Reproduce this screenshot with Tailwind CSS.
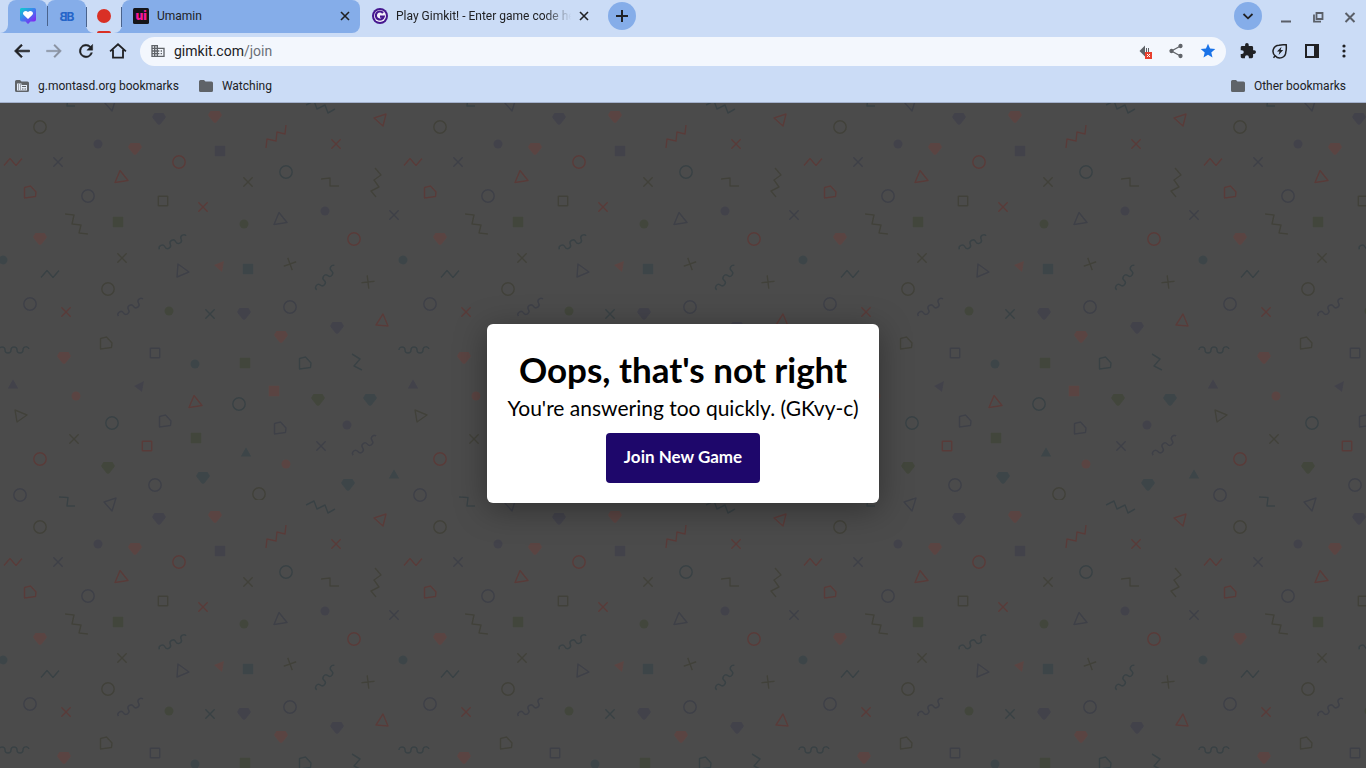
<!DOCTYPE html>
<html lang="en">
<head>
  <meta charset="UTF-8" />
  <meta name="viewport" content="width=device-width, initial-scale=1.0" />
  <title>Play Gimkit! - Enter game code here</title>
  <script src="https://cdn.jsdelivr.net/npm/@tailwindcss/browser@4"></script>
</head>
<body class="flex h-screen flex-col overflow-hidden bg-[#4b4b4b] font-['Roboto',sans-serif] text-xs text-[#202124]">

  <header class="border-b border-[#a3b1cc] bg-[#cbdcf6]">
    <!-- Tab strip -->
    <div class="flex h-[33px] items-stretch">
      <svg class="w-2" viewBox="0 0 8 33" fill="#85ade9"><path d="M8 25v8H0a8 8 0 0 0 8-8z"/></svg>
      <button aria-label="Pinned tab" class="flex w-[39px] items-center justify-center rounded-t-lg bg-[#85ade9] pb-0.5">
        <svg class="size-4" viewBox="0 0 16 16">
          <defs><linearGradient id="heart" x1="0" y1="0" x2="0.8" y2="1"><stop offset="0" stop-color="#08d3cb"/><stop offset=".5" stop-color="#3f7df0"/><stop offset="1" stop-color="#8a1df2"/></linearGradient></defs>
          <path fill="url(#heart)" d="M1.500 0h13A1.500 1.500 0 0 1 16 1.500v10a2 2 0 0 1-2 2h-3.500L8 16l-2.500-2.500H2a2 2 0 0 1-2-2v-10A1.500 1.500 0 0 1 1.500 0z"/>
          <path fill="#fff" d="M8 11 4 7.200a2.400 2.400 0 0 1 0-3.600 2.600 2.600 0 0 1 4 .5 2.600 2.600 0 0 1 4-.5 2.400 2.400 0 0 1 0 3.600z"/>
        </svg>
      </button>
      <button aria-label="Pinned tab" class="flex w-[39px] items-center rounded-t-lg bg-[#85ade9] pb-0.5">
        <span class="h-5 w-px bg-[#4a638c]"></span>
        <svg class="mx-auto size-4" viewBox="0 0 16 16" font-family="Inter, sans-serif" font-size="12" font-weight="700" fill="#2565c8">
          <text x="7.500" y="12.500">B</text>
          <text x="-8.500" y="12.500" transform="scale(-1 1)">B</text>
        </svg>
      </button>
      <div class="flex bg-linear-to-b from-[#cbdcf6] from-50% to-[#85ade9] to-50%">
        <button aria-label="Recording tab" class="flex w-9 items-center justify-between rounded-b-lg bg-[#cbdcf6]">
          <span class="h-5 w-px bg-[#4a638c]"></span>
          <span class="flex h-full flex-col items-center justify-end gap-2">
            <span class="size-3.5 rounded-full bg-[#d93025]"></span>
            <span class="h-0.5 w-3.5 rounded-t-sm bg-[#d93025]"></span>
          </span>
          <span class="h-5 w-px bg-[#4a638c]"></span>
        </button>
      </div>
      <div class="flex w-[238px] items-center rounded-t-lg rounded-br-lg bg-[#85ade9] pr-1 pb-0.5 pl-[11px]">
        <svg class="size-4" viewBox="0 0 16 16"><rect width="16" height="16" rx="1.500" fill="#15161a"/><text x="2.500" y="12" font-family="Inter, sans-serif" font-size="12" font-weight="900" fill="#f5179a">ui</text></svg>
        <span class="ml-2 flex-1">Umamin</span>
        <button aria-label="Close Umamin" class="p-1"><svg class="size-[14px]" viewBox="0 0 14 14" stroke="#202124" stroke-width="1.600"><path d="M3 3l8 8M11 3l-8 8"/></svg></button>
      </div>
      <div class="flex w-60 items-center pr-[5px] pb-0.5 pl-3">
        <svg class="size-4" viewBox="0 0 16 16"><circle cx="8" cy="8" r="8" fill="#46178f"/><circle cx="8" cy="8" r="6" fill="#f4f0fa"/><path d="M11 5A4 4 0 1 0 11.700 8.600H8" fill="none" stroke="#46178f" stroke-width="2.200"/></svg>
        <span class="ml-2 flex-1 overflow-hidden whitespace-nowrap [mask-image:linear-gradient(to_right,black_84%,transparent_99%)]">Play Gimkit! - Enter game code here</span>
        <button aria-label="Close Gimkit" class="p-1"><svg class="size-[14px]" viewBox="0 0 14 14" stroke="#202124" stroke-width="1.600"><path d="M3 3l8 8M11 3l-8 8"/></svg></button>
      </div>
      <button aria-label="New tab" class="mt-0.5 ml-2 flex size-7 items-center justify-center rounded-full bg-[#85ade9]">
        <svg class="size-3" viewBox="0 0 12 12" stroke="#202124" stroke-width="2"><path d="M6 0v12M0 6h12"/></svg>
      </button>
      <div class="ml-auto flex items-center">
        <button aria-label="Search tabs" class="mr-2 mb-0.5 flex size-7 items-center justify-center rounded-full bg-[#85ade9]"><svg class="size-3" viewBox="0 0 12 12" fill="none" stroke="#202124" stroke-width="1.800"><path d="M1.500 4 6 8.300 10.500 4"/></svg></button>
        <button aria-label="Minimize" class="w-8 p-2"><svg class="size-4" viewBox="0 0 16 16" fill="#5a5f68"><path d="M3 11.500h10v2H3z"/></svg></button>
        <button aria-label="Restore" class="w-8 p-2"><svg class="size-4" viewBox="0 0 16 16" fill="none" stroke="#5a5f68" stroke-width="1.800"><path d="M6.500 4h6v6h-6zM4 5.500v7.200h7"/></svg></button>
        <button aria-label="Close window" class="w-8 p-2"><svg class="size-4" viewBox="0 0 16 16" stroke="#5a5f68" stroke-width="2"><path d="M3.500 4l9 9M12.500 4l-9 9"/></svg></button>
      </div>
    </div>

    <!-- Toolbar -->
    <div class="flex h-9 items-center px-3">
      <nav class="flex gap-3">
        <button aria-label="Back"><svg class="size-5" viewBox="0 0 24 24" fill="#202124"><path d="M21 11H6.830l5.590-5.590L11 4l-8 8 8 8 1.410-1.410L6.830 13H21z" stroke="#202124" stroke-width=".8"/></svg></button>
        <button aria-label="Forward"><svg class="size-5" viewBox="0 0 24 24" fill="#8991a0"><path d="M3 11h14.170l-5.590-5.590L13 4l8 8-8 8-1.410-1.410L17.170 13H3z" stroke="#8991a0" stroke-width=".4"/></svg></button>
        <button aria-label="Reload"><svg class="size-5" viewBox="0 0 24 24" fill="#202124"><path stroke="#202124" stroke-width=".5" d="M17.650 6.350A8 8 0 1 0 19.730 14h-2.080A6 6 0 1 1 12 6c1.660 0 3.140.69 4.220 1.780L13 11h7V4z"/></svg></button>
        <button aria-label="Home"><svg class="size-5" viewBox="0 0 24 24" fill="none" stroke="#202124" stroke-width="2.200"><path d="M2.500 12.500 12 4l9.500 8.500M6 10.500V20h12v-9.500"/></svg></button>
      </nav>
      <div class="ml-3 flex h-[29px] flex-1 items-center rounded-full bg-[#f3f7fd] px-2.5">
        <svg class="size-4" viewBox="0 0 24 24" fill="#5f6368"><path d="M12 7V3H2v18h20V7H12zM6 19H4v-2h2v2zm0-4H4v-2h2v2zm0-4H4V9h2v2zm0-4H4V5h2v2zm4 12H8v-2h2v2zm0-4H8v-2h2v2zm0-4H8V9h2v2zm0-4H8V5h2v2zm10 12h-8v-2h2v-2h-2v-2h2v-2h-2V9h8v10zm-2-8h-2v2h2v-2zm0 4h-2v2h2v-2z"/></svg>
        <a href="#" class="ml-2 flex-1 text-sm">gimkit.com<span class="text-[#6b7078]">/join</span></a>
        <div class="flex items-center gap-4">
          <button aria-label="Sound blocked"><svg class="size-4" viewBox="0 0 16 16"><path fill="#5f6368" d="M3.500 8 9 2.500v11z"/><path stroke="#5f6368" d="M10.500 5v4M12.500 5v4"/><rect x="9" y="9" width="7" height="7" fill="#e8402f"/><path d="M11 11l3 3M14 11l-3 3" stroke="#fff"/></svg></button>
          <button aria-label="Share"><svg class="size-4" viewBox="0 0 16 16" fill="#5f6368" stroke="#5f6368" stroke-width="1.300"><path fill="none" d="M12.500 3 3.500 8l9 5"/><circle cx="12.500" cy="3" r="1.500"/><circle cx="3.500" cy="8" r="1.500"/><circle cx="12.500" cy="13" r="1.500"/></svg></button>
          <button aria-label="Edit bookmark"><svg class="size-4" viewBox="1 1 22 22" fill="#1a73e8"><path d="M12 17.270 18.180 21l-1.640-7.030L22 9.240l-7.190-.61L12 2 9.190 8.630 2 9.240l5.460 4.730L5.820 21z"/></svg></button>
        </div>
      </div>
      <div class="ml-3 flex gap-3">
        <button aria-label="Extensions" class="flex size-5 items-center justify-center"><svg class="size-4" viewBox="1 1 22 22" fill="#202124"><path d="M20.500 11H19V7a2 2 0 0 0-2-2h-4V3.500a2.500 2.500 0 0 0-5 0V5H4a2 2 0 0 0-2 2v3.800h1.500a2.700 2.700 0 0 1 0 5.400H2V20a2 2 0 0 0 2 2h3.800v-1.500a2.700 2.700 0 0 1 5.400 0V22H17a2 2 0 0 0 2-2v-4h1.500a2.500 2.500 0 0 0 0-5z"/></svg></button>
        <button aria-label="Energy saver" class="flex size-5 items-center justify-center"><svg class="size-4" viewBox="0 0 16 16" fill="none" stroke="#202124" stroke-width="1.500"><path d="M3.200 12.800A6 6 0 0 1 7 2.200c2.500-.6 5-.2 7.200-.4.200 2.400.4 4.700-.4 7.200a6 6 0 0 1-10.600 3.800zM3.200 12.800 1.500 14.700"/><path fill="#202124" stroke="none" d="M9.500 3.800 5 8.600h2.500L6.600 12l4.600-4.900H8.700z"/></svg></button>
        <button aria-label="Side panel" class="flex size-5 items-center justify-center"><svg class="size-3.5" viewBox="0 0 14 14"><path fill="#202124" fill-rule="evenodd" d="M0 0h14v14H0zM2 2v10h7V2z"/></svg></button>
        <button aria-label="Menu" class="flex size-5 items-center justify-center"><svg class="size-4" viewBox="0 0 16 16" fill="#202124"><circle cx="8" cy="3" r="1.600"/><circle cx="8" cy="8" r="1.600"/><circle cx="8" cy="13" r="1.600"/></svg></button>
      </div>
    </div>

    <!-- Bookmarks bar -->
    <div class="flex h-[33px] items-center gap-[19px] pr-5 pl-3.5">
      <a href="#" class="flex items-center gap-2">
        <svg class="size-4" viewBox="0 0 16 16"><path fill="#5f6368" d="M2.500 2H6l1.500 1.500h6A1.500 1.500 0 0 1 15 5v7.500a1.500 1.500 0 0 1-1.500 1.500h-11A1.500 1.500 0 0 1 1 12.500v-9A1.500 1.500 0 0 1 2.500 2z"/><path fill="#e4ecf8" d="M3 5.500h4.500V7H13v5.500H3z"/><path fill="#5f6368" d="M4 6.500h1v1H4zM6 6.500h1v1H6zM4 8.500h1v1H4zM6 8.500h1v1H6zM4 10.500h1v1H4zM6 10.500h1v1H6zM8 8h4v1H8zM8 10.500h1.500v1H8zM10.500 10.500H12v1h-1.500z"/></svg>
        g.montasd.org bookmarks
      </a>
      <a href="#" class="flex items-center gap-2">
        <svg class="size-4" viewBox="0 0 16 16" fill="#5f6368"><path d="M2.500 2H6l1.500 1.500h6A1.500 1.500 0 0 1 15 5v7.500a1.500 1.500 0 0 1-1.500 1.500h-11A1.500 1.500 0 0 1 1 12.500v-9A1.500 1.500 0 0 1 2.500 2z"/></svg>
        Watching
      </a>
      <a href="#" class="ml-auto flex items-center gap-2">
        <svg class="size-4" viewBox="0 0 16 16" fill="#5f6368"><path d="M2.500 2H6l1.500 1.500h6A1.500 1.500 0 0 1 15 5v7.500a1.500 1.500 0 0 1-1.500 1.500h-11A1.500 1.500 0 0 1 1 12.500v-9A1.500 1.500 0 0 1 2.500 2z"/></svg>
        Other bookmarks
      </a>
    </div>
  </header>

  <main class="relative flex flex-1 items-center justify-center pb-11">
    <!-- Confetti wallpaper, 400px tile -->
    <svg class="absolute inset-0 h-full w-full" aria-hidden="true">
      <defs>
        <g id="ring"><circle r="6.200"/></g>
        <g id="dot"><circle r="4.500"/></g>
        <g id="box"><path d="M-4.700-4.700h9.400v9.400h-9.400z"/></g>
        <g id="block"><path d="M-5.300-5.300H5.300V5.300H-5.300z"/></g>
        <g id="cross"><path d="M-4.700-4.700 4.700 4.700M4.700-4.700-4.700 4.700"/></g>
        <g id="gem"><path d="M-4.500-6h9L6.800-2.500 6.500-1 1 5.800h-2L-6.500-1l-.3-1.500z"/></g>
        <g id="tri"><path d="M-1-6.500-6 5.500 7 3.500z"/></g>
        <g id="wedge"><path d="M0-4.800 5.300 4.500H-5.300z"/></g>
        <g id="pent"><path d="M-5.500-4.500.5-6 6 0 5.500 4.500-5.500 6z"/></g>
        <g id="wave"><path d="M-15 0c0-4 6-4 6 0s6 4 6 0 6-4 6 0 6 4 6 0 5-4 6-1"/></g>
        <g id="zig"><path d="M-9 3.500-3-3.500 3 3.500 9-3.500"/></g>
        <g id="stair"><path d="M-11-10-2-9-4 0 5 1 3 9 12 10"/></g>
        <g id="step"><path d="M-8-4l9 .5-1 8.500h8"/></g>
        <pattern id="confetti" width="400" height="400" patternUnits="userSpaceOnUse" patternTransform="translate(0 -3)">
          <g fill="#5a4442">
            <use href="#gem" x="215" y="17"/><use href="#gem" x="135" y="49"/><use href="#gem" x="40" y="139"/><use href="#gem" x="64" y="258"/><use href="#gem" x="281" y="237"/>
            <use href="#dot" x="76" y="296"/><use href="#dot" x="286" y="364"/><use href="#block" x="274" y="291"/>
            <path d="M214 165l10-4-2 11z"/>
          </g>
          <g fill="#42424a">
            <use href="#gem" x="159" y="19"/><use href="#gem" x="244" y="214"/><use href="#gem" x="337" y="228"/>
            <use href="#dot" x="98" y="44"/><use href="#dot" x="325" y="111"/><use href="#dot" x="347" y="325"/><use href="#block" x="220" y="51"/>
            <use href="#wedge" x="13" y="284"/><path d="M134 286l10-5-2 11z"/>
          </g>
          <g fill="#42463c">
            <use href="#gem" x="108" y="368"/><use href="#gem" x="318" y="300"/><use href="#dot" x="244" y="124"/><use href="#dot" x="169" y="211"/>
            <use href="#block" x="118" y="122"/><use href="#block" x="245" y="263"/><use href="#block" x="196" y="338"/>
          </g>
          <g fill="#3d4548">
            <use href="#gem" x="203" y="378"/><use href="#gem" x="370" y="300"/><use href="#gem" x="348" y="385"/><use href="#dot" x="3" y="160"/><use href="#dot" x="403" y="160"/><use href="#dot" x="195" y="264"/>
            <use href="#block" x="248" y="169"/><use href="#wedge" x="246" y="352"/><use href="#wedge" x="394" y="374"/>
          </g>
          <g fill="none" stroke="#583b39" stroke-width="1.500" stroke-linejoin="round">
            <use href="#ring" x="179" y="62"/><use href="#ring" x="354" y="139"/><use href="#ring" x="40" y="359"/>
            <use href="#cross" x="203" y="107"/><use href="#cross" x="336" y="44"/><use href="#cross" x="66" y="212"/>
            <use href="#zig" x="13" y="62"/><use href="#zig" x="413" y="62"/><use href="#pent" x="30" y="92"/><use href="#tri" x="121" y="77"/><use href="#tri" x="195" y="302"/><use href="#box" x="147" y="346"/>
            <path d="M374 18l12-4-3 12zM383 214l-7 11 12 1zM266 48l1-9 9 2 1-9 8 2 1-9"/>
          </g>
          <g fill="none" stroke="#3e4047" stroke-width="1.500" stroke-linejoin="round">
            <use href="#ring" x="88" y="96"/><use href="#ring" x="30" y="204"/><use href="#ring" x="20" y="395"/><use href="#ring" x="20" y="-5"/><use href="#ring" x="155" y="385"/><use href="#ring" x="290" y="207"/>
            <use href="#cross" x="58" y="62"/><use href="#cross" x="394" y="115"/><use href="#cross" x="321" y="346"/>
            <use href="#tri" x="280" y="119"/><path d="M178 164l-1 13 12-5z"/><use href="#pent" x="165" y="321"/><use href="#pent" x="280" y="328"/><use href="#box" x="155" y="253"/>
            <path d="M104 2l12-4-4 13zM104 402l12-4-4 13z"/>
            <use href="#wave" transform="translate(131 208) rotate(-33)"/><use href="#wave" transform="translate(365 346) rotate(-38)"/>
          </g>
          <g fill="none" stroke="#394144" stroke-width="1.500" stroke-linejoin="round">
            <use href="#ring" x="286" y="72"/><use href="#ring" x="112" y="323"/><use href="#ring" x="239" y="304"/><use href="#cross" x="210" y="214"/>
            <use href="#zig" x="50" y="174"/><use href="#pent" x="305" y="263"/><use href="#wave" x="14" y="250"/><use href="#wave" x="414" y="250"/>
            <use href="#wave" transform="translate(173 143) rotate(-25)"/><use href="#wave" transform="translate(326 178) rotate(-52)"/>
            <use href="#step" x="67" y="1"/><use href="#step" x="67" y="401"/><path d="M352 254l8 5-6 7 8 4M306 5l8-4 3 8 8-4 3 8 7-4"/>
          </g>
          <g fill="none" stroke="#41413a" stroke-width="1.500" stroke-linejoin="round">
            <use href="#ring" x="40" y="27"/><use href="#ring" x="108" y="189"/><use href="#ring" x="259" y="394"/>
            <use href="#cross" x="248" y="82"/><use href="#cross" x="122" y="158"/><use href="#cross" x="74" y="339"/>
            <use href="#cross" transform="translate(290 164) rotate(25)"/><use href="#cross" transform="translate(368 182) rotate(38)"/>
            <use href="#box" x="163" y="101"/><use href="#stair" x="76" y="124"/><use href="#pent" x="106" y="243"/><path d="M15 310l2 12 10-7zM321 79l9-1v8h9M375 68l6 7-7 5 5 7-8 4 5 6"/>
          </g>
        </pattern>
      </defs>
      <rect width="100%" height="100%" fill="url(#confetti)"/>
    </svg>

    <section class="relative flex flex-col items-center rounded-md bg-white p-5 font-['Lato',sans-serif] text-black shadow-[0_6px_32px_rgba(0,0,0,0.35)]">
      <h1 class="text-[35px] leading-[50px] font-bold">Oops, that's not right</h1>
      <p class="text-[21px] leading-[27px]">You're answering too quickly. (GKvy-c)</p>
      <button class="mt-3 h-[50px] rounded bg-[#1e076b] px-[18px] pb-0.5 text-[17px] font-bold text-white">Join New Game</button>
    </section>
  </main>
</body>
</html>
